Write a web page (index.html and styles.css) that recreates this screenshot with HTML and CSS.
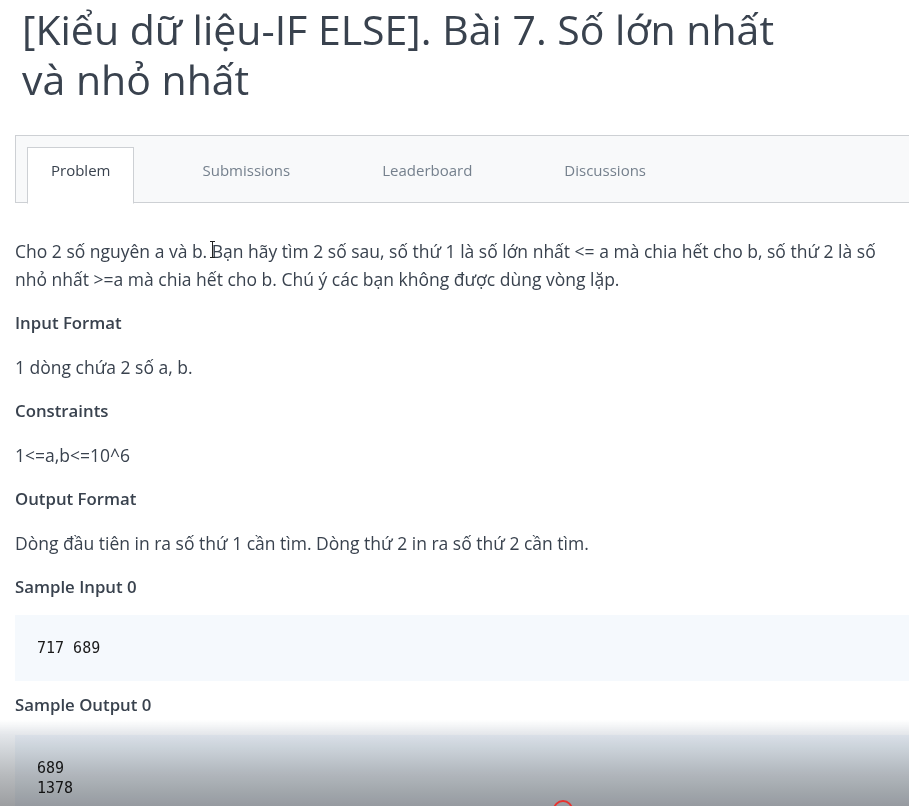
FILE: index.html
```html
<!DOCTYPE html>
<html lang="vi">
<head>
<meta charset="utf-8">
<link rel="stylesheet" href="styles.css">
</head>
<body>
<div class="page">
  <h1 class="title">[Kiểu dữ liệu-IF ELSE]. Bài 7. Số lớn nhất và nhỏ nhất</h1>
  <div class="tabs">
    <div class="tab active">Problem</div>
    <div class="tab">Submissions</div>
    <div class="tab">Leaderboard</div>
    <div class="tab">Discussions</div>
  </div>
  <div class="content">
    <p class="text first">Cho 2 số nguyên a và b. Bạn hãy tìm 2 số sau, số thứ 1 là số lớn nhất &lt;= a mà chia hết cho b, số thứ 2 là số nhỏ nhất &gt;=a mà chia hết cho b. Chú ý các bạn không được dùng vòng lặp.</p>
    <h3 class="head">Input Format</h3>
    <p class="text">1 dòng chứa 2 số a, b.</p>
    <h3 class="head">Constraints</h3>
    <p class="text">1&lt;=a,b&lt;=10^6</p>
    <h3 class="head">Output Format</h3>
    <p class="text">Dòng đầu tiên in ra số thứ 1 cần tìm. Dòng thứ 2 in ra số thứ 2 cần tìm.</p>
    <h3 class="head">Sample Input 0</h3>
    <pre class="code">717 689</pre>
    <h3 class="head out">Sample Output 0</h3>
    <pre class="code">689
1378</pre>
  </div>
</div>
<div class="cursor"></div>
<div class="shade"></div>
<div class="ring"></div>
</body>
</html>
```
FILE: styles.css
```css
html, body {
  margin: 0;
  padding: 0;
  background: #ffffff;
  overflow: hidden;
  height: 806px;
}
body {
  font-family: "Open Sans", "Noto Sans", sans-serif;
  color: #39424e;
  position: relative;
}
.page {
  width: 930px;
  padding-left: 15px;
}
.title {
  margin: 0;
  padding: 4px 0 0 7px;
  max-width: 800px;
  font-size: 41px;
  font-weight: 400;
  line-height: 50px;
  color: #39424e;
}
.tabs {
  margin-top: 31px;
  height: 68px;
  border-top: 1px solid #cdd0d4;
  border-bottom: 1px solid #cdd0d4;
  border-left: 1px solid #cdd0d4;
  background: #f8f9fa;
  display: flex;
  gap: 44px;
  padding: 11px 0 0 11px;
  box-sizing: border-box;
}
.tab {
  padding: 10px 23px 0 23px;
  font-size: 15px;
  line-height: 24px;
  color: #75808d;
  border: 1px solid transparent;
  height: 57px;
  box-sizing: border-box;
}
.tab.active {
  background: #ffffff;
  border-color: #cdd0d4;
  border-bottom-color: #ffffff;
  color: #39424e;
}
.content {
  padding-top: 34px;
}
.text {
  margin: 0 0 16px 0;
  font-size: 17.5px;
  line-height: 28px;
  color: #39424e;
  max-width: 880px;
}
.head {
  margin: 0 0 16px 0;
  font-size: 16.8px;
  line-height: 28px;
  font-weight: 600;
  color: #39424e;
}
.head.out {
  margin-top: 10px;
  margin-bottom: 18px;
}
.head + .code {
  margin-top: -2px;
}
.code {
  margin: 0;
  background: #f5f9fd;
  padding: 23px 22px;
  font-family: "DejaVu Sans Mono", monospace;
  font-size: 15px;
  line-height: 20px;
  color: #1a1a1a;
}
.cursor {
  position: absolute;
  left: 210px;
  top: 241px;
  width: 5px;
  height: 17px;
  border-top: 1px solid #222;
  border-bottom: 1px solid #222;
  box-sizing: border-box;
}
.cursor::after {
  content: "";
  position: absolute;
  left: 2px;
  top: 0;
  width: 1px;
  height: 15px;
  background: #222;
}
.shade {
  position: absolute;
  left: 0;
  right: 0;
  top: 720px;
  height: 86px;
  background: linear-gradient(to bottom, rgba(255,255,255,0) 0%, #e3e6ea 17%, #d3d7db 33%, #b7babd 64%, #9c9ea1 100%);
  mix-blend-mode: multiply;
  pointer-events: none;
}
.ring {
  position: absolute;
  left: 553px;
  top: 800px;
  width: 20px;
  height: 20px;
  border: 2px solid #e8322f;
  border-radius: 50%;
  box-sizing: border-box;
}
```
